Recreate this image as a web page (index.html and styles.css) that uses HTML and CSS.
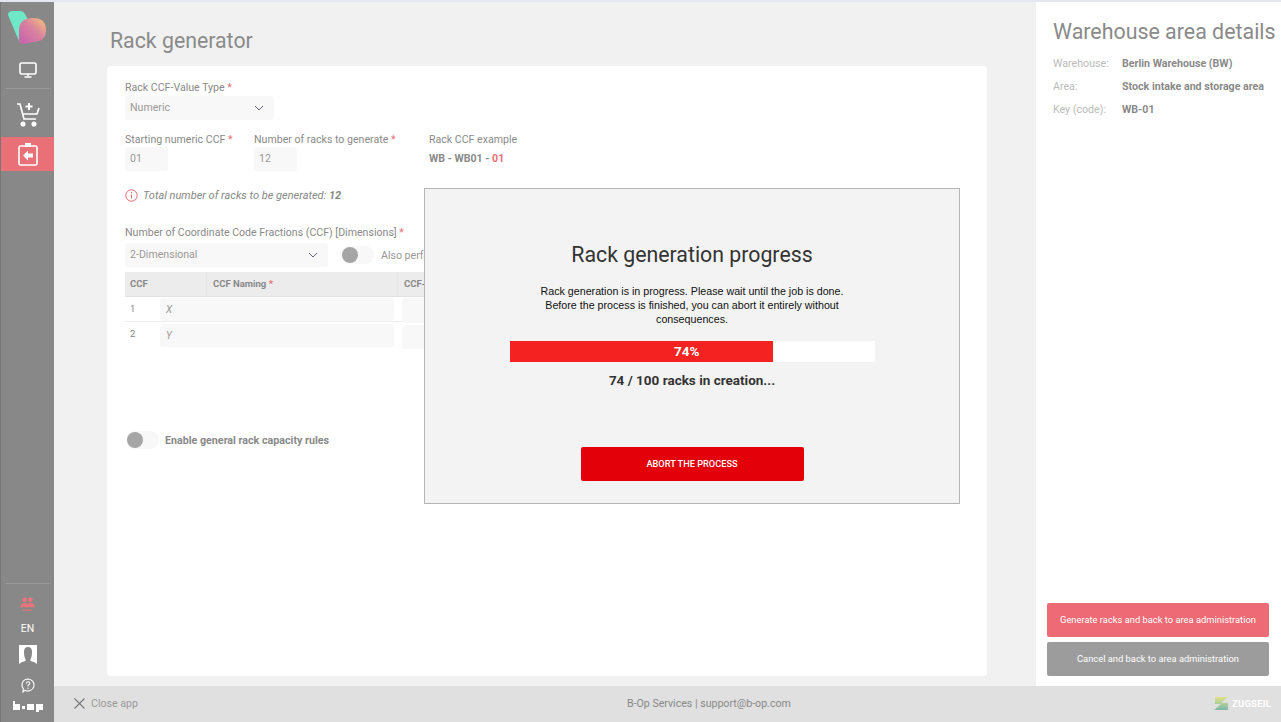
FILE: index.html
```html
<!DOCTYPE html>
<html lang="en">
<head>
<meta charset="utf-8">
<title>Rack generator</title>
<link rel="stylesheet" href="styles.css">
</head>
<body>
<div class="app">
  <aside class="sidebar">
    <svg class="logo" width="38" height="33" viewBox="0 0 38 33">
      <defs><linearGradient id="lg" x1="0" y1="1" x2="1" y2="0"><stop offset="0" stop-color="#c55fb0"/><stop offset=".55" stop-color="#d9829f"/><stop offset="1" stop-color="#f8c878"/></linearGradient></defs>
      <path d="M0 4Q0 0 5 0L12 0Q16 0 18 5L25 18L12 31Q10 28 8 23Z" fill="#6fe8c8"/>
      <path d="M11 18Q12 7 25 7Q38 7 38 19Q38 31 25 31L16 33Q11 33 11 28Z" fill="url(#lg)"/>
    </svg>
    <svg class="nav-icon monitor" width="18" height="16" viewBox="0 0 18 16" fill="none" stroke="#fff" stroke-width="1.6"><rect x="1" y="1" width="16" height="11" rx="1.5"/><path d="M9 12v2M5.5 15h7" /></svg>
    <div class="rule"></div>
    <svg class="nav-icon cart" width="24" height="25" viewBox="0 0 24 25" fill="none" stroke="#fff" stroke-width="1.7"><path d="M1 2h3l4 15h12"/><path d="M6 12h15l2-6"/><path d="M13 1v7M9.5 4.500h7" stroke-width="2"/><circle cx="7" cy="22" r="1.700" fill="#fff"/><circle cx="18" cy="22" r="1.700" fill="#fff"/></svg>
    <div class="nav-active">
      <svg width="20" height="23" viewBox="0 0 20 23" fill="none" stroke="#fff" stroke-width="1.600"><rect x="1" y="3" width="18" height="19" rx="1.500"/><rect x="7" y="0" width="6" height="4" fill="#fff" stroke="none"/><path d="M15 10.500v4h-5v3l-5-5 5-5v3z" fill="#fff" stroke="none"/></svg>
    </div>
    <div class="sidebar-bottom">
      <div class="rule"></div>
      <svg class="people" width="15" height="15" viewBox="0 0 16 16" fill="#e8757c"><circle cx="5" cy="3" r="2.500"/><circle cx="11" cy="3" r="2.500"/><path d="M0 11Q1 6 5 6.500Q8 6 8 8Q8 6 11 6.500Q15 6 16 11Z"/><path d="M3 14h10" stroke="#e8757c" stroke-width="1.200"/></svg>
      <span class="lang">EN</span>
      <svg class="avatar" width="18" height="21" viewBox="0 0 18 21"><rect width="18" height="21" fill="#fff"/><path d="M0 21v-2Q2 17 6.500 16V14Q5 12 5 7Q5 2 9 2Q13 2 13 7Q13 12 11.500 14V16Q16 17 18 19V21Z" fill="#888"/></svg>
      <svg class="help" width="14" height="15" viewBox="0 0 14 15" fill="none" stroke="#fff" stroke-width="1.100"><path d="M7 1a6 6 0 1 1-3 11.200L2 14l.3-3.300A6 6 0 0 1 7 1z"/><path d="M5.300 5.500Q5.500 3.800 7 3.800Q8.800 3.800 8.800 5.300Q8.800 6.300 7 7.300V8.500M7 9.700v1.200"/></svg>
      <svg class="bop" width="30" height="11" viewBox="0 0 30 11" fill="#fff"><path d="M0 0h2v3h5v6H0zM9 5h3v3H9zM14 3h7v6h-7zM23 3h7v6h-4v2h-3z"/></svg>
    </div>
  </aside>
  <div class="content">
    <div class="upper">
      <main class="main">
        <h1 class="page-title">Rack generator</h1>
        <section class="card">
          <label class="label">Rack CCF-Value Type <i class="req">*</i></label>
          <div class="select select-type"><span>Numeric</span><svg class="chev" width="10" height="6" viewBox="0 0 10 6" fill="none" stroke="#667" stroke-width="1"><path d="M1 1l4 4 4-4"/></svg></div>
          <div class="field-row">
            <div class="field f1"><label class="label">Starting numeric CCF <i class="req">*</i></label><div class="input small">01</div></div>
            <div class="field f2"><label class="label">Number of racks to generate <i class="req">*</i></label><div class="input small">12</div></div>
            <div class="field"><label class="label">Rack CCF example</label><div class="example">WB - WB01 - <span class="accent">01</span></div></div>
          </div>
          <div class="total">
            <svg width="13" height="13" viewBox="0 0 13 13" fill="none" stroke="#e8656e" stroke-width="1"><circle cx="6.500" cy="6.500" r="5.700"/><path d="M6.500 5.500v4M6.500 3v1.300"/></svg>
            <em>Total number of racks to be generated: <b>12</b></em>
          </div>
          <label class="label dim-label">Number of Coordinate Code Fractions (CCF) [Dimensions] <i class="req">*</i></label>
          <div class="dim-row">
            <div class="select select-dim"><span>2-Dimensional</span><svg class="chev" width="10" height="6" viewBox="0 0 10 6" fill="none" stroke="#667" stroke-width="1"><path d="M1 1l4 4 4-4"/></svg></div>
            <span class="toggle"><span class="knob"></span></span>
            <span class="toggle-text">Also perform</span>
          </div>
          <div class="table">
            <div class="thead"><span class="th c1">CCF</span><span class="th c2">CCF Naming <i class="req">*</i></span><span class="th c3">CCF-Type</span></div>
            <div class="row row-line"><span class="num">1</span><span class="cell-input"><em>X</em></span><span class="cell-input side"></span></div>
            <div class="row"><span class="num">2</span><span class="cell-input"><em>Y</em></span><span class="cell-input side"></span></div>
          </div>
          <div class="capacity"><span class="toggle"><span class="knob"></span></span><b>Enable general rack capacity rules</b></div>
        </section>
      </main>
      <aside class="details">
        <h2 class="details-title">Warehouse area details</h2>
        <dl class="facts">
          <dt>Warehouse:</dt><dd>Berlin Warehouse (BW)</dd>
          <dt>Area:</dt><dd>Stock intake and storage area</dd>
          <dt>Key (code):</dt><dd>WB-01</dd>
        </dl>
        <div class="actions">
          <button class="btn btn-primary">Generate racks and back to area administration</button>
          <button class="btn btn-cancel">Cancel and back to area administration</button>
        </div>
      </aside>
    </div>
    <footer class="footer">
      <span class="close"><svg width="11" height="11" viewBox="0 0 11 11" stroke="#777" stroke-width="1.100"><path d="M.5.500l10 10M10.500.500l-10 10"/></svg>Close app</span>
      <span class="support">B-Op Services | support@b-op.com</span>
      <span class="brand"><svg width="14" height="13" viewBox="0 0 14 13"><defs><linearGradient id="zg" x1="0" y1="0" x2="0" y2="1"><stop offset="0" stop-color="#dfe08a"/><stop offset="1" stop-color="#7cb8a8"/></linearGradient></defs><path d="M1 0h13L7 6h7v7H0L7 7H1z" fill="url(#zg)"/></svg>ZUGSEIL</span>
    </footer>
  </div>
  <div class="modal">
    <h2 class="modal-title">Rack generation progress</h2>
    <p class="modal-text">Rack generation is in progress. Please wait until the job is done.<br>Before the process is finished, you can abort it entirely without consequences.</p>
    <div class="progress"><div class="progress-bar">74%</div></div>
    <div class="progress-note">74 / 100 racks in creation...</div>
    <button class="abort">ABORT THE PROCESS</button>
  </div>
</div>
</body>
</html>
```
FILE: styles.css
```css
* { box-sizing: border-box; }
html, body { margin: 0; height: 100%; overflow: hidden; }
body { font-family: Roboto, "Liberation Sans", sans-serif; color: #888; background: #f1f1f1; }
.app { position: relative; display: flex; width: 1281px; height: 722px; border-top: 2px solid #e4e7ee; }
.sidebar { width: 54px; flex: none; background: #888; border-left: 1px solid #777; display: flex; flex-direction: column; align-items: center; }
.logo { margin-top: 9px; align-self: flex-start; margin-left: 7px; }
.monitor { margin-top: 18px; }
.rule { width: 45px; height: 1px; background: #9a9a9a; align-self: center; }
.sidebar > .rule { margin-top: 10px; }
.cart { margin-top: 13px; }
.nav-active { width: 53px; height: 34px; margin-top: 10px; background: #ea7077; display: flex; align-items: center; justify-content: center; }
.sidebar-bottom { margin-top: auto; display: flex; flex-direction: column; align-items: center; width: 100%; height: 139px; }
.people { margin-top: 13px; }
.lang { margin-top: 11px; font-size: 10.500px; line-height: 12px; color: #fff; }
.avatar { margin-top: 10px; }
.help { margin-top: 12px; }
.bop { margin-top: 8px; }
.content { flex: 1; min-width: 0; display: flex; flex-direction: column; }
.upper { flex: 1; min-height: 0; display: flex; }
.main { flex: 1; min-width: 0; padding: 0 49px 10px 53px; display: flex; flex-direction: column; }
.page-title { margin: 25px 0 12px 3px; font-size: 21.300px; line-height: 27px; font-weight: 400; color: #8a8a8a; }
.card { flex: 1; background: #fff; border-radius: 4px; padding: 15px 18px 0; }
.label { display: block; font-size: 10.600px; line-height: 13px; color: #8a8a8a; }
.req { font-style: normal; color: #ea7077; }
.select { display: flex; align-items: center; justify-content: space-between; height: 24px; margin-top: 2px; padding: 0 10px 1px 5px; background: #f9f8f8; border-radius: 3px; font-size: 10.600px; color: #999; }
.select-type { width: 149px; }
.select-dim { width: 203px; margin-top: 0; }
.field-row { display: flex; margin-top: 13px; }
.field { display: flex; flex-direction: column; }
.f1 { width: 129px; }
.f2 { width: 175px; }
.input { background: #f9f8f8; border-radius: 3px; font-size: 10.600px; color: #999; }
.small { height: 24px; width: 43px; margin-top: 1px; padding: 0 5px; line-height: 23px; }
.example { margin-top: 6px; font-size: 10.600px; line-height: 14px; font-weight: 700; color: #8a8a8a; }
.accent { color: #ea7077; }
.total { display: flex; align-items: center; gap: 5px; margin-top: 17px; height: 14px; font-size: 11px; color: #888; }
.dim-label { margin-top: 24px; }
.dim-row { display: flex; align-items: center; margin-top: 4px; }
.toggle { display: inline-flex; width: 33px; height: 18px; padding: 1px; background: #f9f8f8; border-radius: 9px; }
.dim-row .toggle { margin-left: 13px; }
.knob { width: 16px; height: 16px; border-radius: 50%; background: #a5a5a5; }
.toggle-text { margin-left: 7px; font-size: 10.600px; color: #999; white-space: nowrap; }
.table { margin-top: 5px; font-size: 9.500px; width: 800px; }
.thead { display: flex; height: 25px; align-items: center; background: #ececec; border-bottom: 1px solid #e2e2e2; font-weight: 700; color: #888; }
.c1 { width: 81px; padding-left: 5px; line-height: 24px; }
.c2 { width: 191px; padding-left: 6px; line-height: 24px; border-left: 1px solid #e6e6e6; }
.c3 { padding-left: 6px; line-height: 24px; border-left: 1px solid #e6e6e6; }
.row { display: flex; height: 26px; align-items: flex-start; }
.row-line { height: 25px; background: linear-gradient(#eee,#eee) 0 100% / 277px 1px no-repeat; }
.num { width: 35px; padding: 6px 0 0 5px; line-height: 12px; color: #888; }
.cell-input { width: 234px; height: 23px; margin-top: 1px; padding-left: 6px; line-height: 23px; background: #f9f8f8; border-radius: 3px; color: #999; font-size: 10px; }
.row + .row .cell-input { margin-top: 2px; }
.cell-input.side { margin-left: 8px; height: 25px; }
.row + .row .cell-input.side { margin-top: 3px; height: 24px; }
.capacity { display: flex; align-items: center; gap: 6px; margin-top: 83px; margin-left: 1px; font-size: 10.700px; color: #8a8a8a; }
.details { width: 245px; flex: none; background: #fff; padding: 16px 0 10px 17px; display: flex; flex-direction: column; }
.details-title { margin: 0; font-size: 21.400px; line-height: 27px; font-weight: 400; color: #8a8a8a; white-space: nowrap; }
.facts { display: grid; grid-template-columns: 69px 1fr; row-gap: 10px; margin: 12px 0 0; font-size: 10.650px; line-height: 13px; }
.facts dt { color: #bbb; }
.facts dd { margin: 0; font-weight: 700; color: #8a8a8a; white-space: nowrap; }
.actions { margin-top: auto; margin-left: -6px; display: flex; flex-direction: column; gap: 5px; width: 222px; }
.btn { height: 34px; border: 0; border-radius: 2px; color: #fff; font: 9.350px Roboto, sans-serif; padding: 0 0 2px; }
.btn-primary { background: #ee6a74; }
.btn-cancel { background: #9c9c9c; }
.footer { flex: none; height: 36px; display: grid; grid-template-columns: 553px auto 1fr; align-items: center; background: #e0e0e0; font-size: 10.600px; color: #888; padding: 0 10px 2px 20px; }
.close { display: flex; align-items: center; gap: 6px; color: #999; }
.support { color: #888; }
.brand { justify-self: end; display: flex; align-items: center; gap: 4px; font-weight: 700; font-size: 9.500px; letter-spacing: .2px; color: #fff; }
.modal { position: absolute; left: 424px; top: 186px; width: 536px; height: 316px; background: #f3f3f3; border: 1px solid #b5b5b5; display: flex; flex-direction: column; align-items: center; }
.modal-title { margin: 53px 0 0; font-size: 21.300px; line-height: 26px; font-weight: 400; color: #333; }
.modal-text { width: 330px; margin: 16px 0 0; font: 10.700px/14px "Liberation Sans", Arial, sans-serif; color: #111; text-align: center; }
.progress { width: 365px; height: 21px; margin-top: 15px; margin-left: 1px; background: #fff; }
.progress-bar { width: 263px; height: 21px; background: #f52222; color: #fff; font-size: 13.500px; font-weight: 700; line-height: 21px; padding-left: 164px; white-space: nowrap; }
.progress-note { margin-top: 10px; font-size: 13.500px; line-height: 16px; font-weight: 700; color: #333; }
.abort { margin-top: 59px; width: 223px; height: 34px; border: 0; border-radius: 2px; background: #e40008; color: #fff; font: 500 9.200px Roboto, sans-serif; padding: 0 0 2px; }
```
